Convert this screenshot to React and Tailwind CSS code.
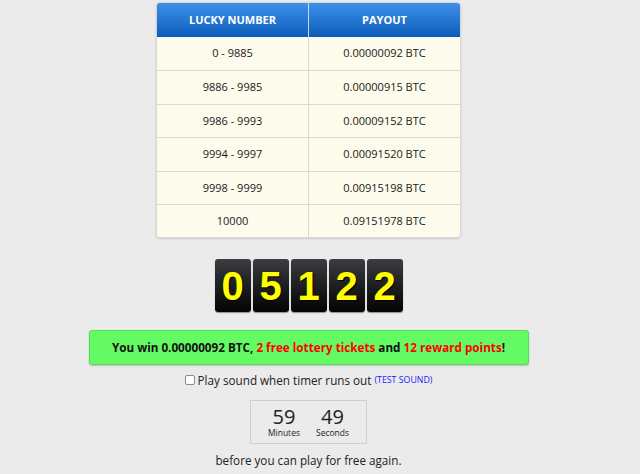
import React from 'react';

const rows = [
  ['0 - 9885', '0.00000092 BTC'],
  ['9886 - 9985', '0.00000915 BTC'],
  ['9986 - 9993', '0.00009152 BTC'],
  ['9994 - 9997', '0.00091520 BTC'],
  ['9998 - 9999', '0.00915198 BTC'],
  ['10000', '0.09151978 BTC'],
];

const digits = ['0', '5', '1', '2', '2'];

export default function App() {
  return (
    <div className="w-[640px] h-[474px] overflow-hidden bg-[#ebebeb] text-[#222] font-['Open_Sans',sans-serif]">
      <div className="w-[617px] flex flex-col items-center">
        {/* Payout table */}
        <div className="mt-[2px] w-[305px] rounded-[4px] border border-[#d6d6d6] overflow-hidden shadow-sm">
          <div className="flex h-[34px] bg-gradient-to-b from-[#3d90ea] to-[#0a5cba] text-white text-[11px] font-bold">
            <div className="w-[152px] flex items-center justify-center border-r border-[#c7d6ea]">LUCKY NUMBER</div>
            <div className="flex-1 flex items-center justify-center">PAYOUT</div>
          </div>
          {rows.map((r, i) => (
            <div key={i} className={`flex h-[33.4px] bg-[#fdfbec] text-[11px] text-[#1a1a1a] ${i > 0 ? 'border-t border-[#d9d9d6]' : ''}`}>
              <div className="w-[152px] flex items-center justify-center border-r border-[#d9d9d6]">{r[0]}</div>
              <div className="flex-1 flex items-center justify-center">{r[1]}</div>
            </div>
          ))}
        </div>

        {/* Lucky number flip digits */}
        <div className="mt-[21px] flex gap-[2px]">
          {digits.map((d, i) => (
            <div key={i} className="w-[36px] h-[53px] rounded-[3px] bg-gradient-to-b from-[#3c3d40] via-[#1e1f21] to-[#050505] flex items-center justify-center shadow-[0_1px_1px_rgba(0,0,0,0.4)]">
              <span className="text-[#ffff00] text-[40px] font-bold font-['Liberation_Sans',Arial,sans-serif] leading-none [text-shadow:1px_1px_1px_#000]">{d}</span>
            </div>
          ))}
        </div>

        {/* Win message */}
        <div className="mt-[18px] w-[440px] h-[35px] rounded-[3px] bg-[#63fa63] border border-[#5ad85a] shadow-[0_1px_2px_rgba(0,0,0,0.2)] flex items-center justify-center text-[11.7px] font-bold text-[#111]">
          <span>
            You win 0.00000092 BTC, <span className="text-[#ff0000]">2 free lottery tickets</span> and{' '}
            <span className="text-[#ff0000]">12 reward points</span>!
          </span>
        </div>

        {/* Sound option */}
        <div className="mt-[7px] flex items-center text-[11.7px] leading-[16px] text-[#222]">
          <span className="w-[10px] h-[10px] mr-[3px] rounded-[2px] border border-[#8a8a8a] bg-white"></span>
          <span>Play sound when timer runs out</span>
          <span className="ml-[3px] text-[8.8px] text-[#1a1aff]">(TEST SOUND)</span>
        </div>

        {/* Countdown */}
        <div className="mt-[12px] w-[117px] h-[44px] border border-[#cfcfcf] bg-[#ebebeb] flex items-center justify-center gap-[16px]">
          <div className="flex flex-col items-center">
            <span className="text-[20px] leading-[22px]">59</span>
            <span className="text-[8.5px] leading-[10px]">Minutes</span>
          </div>
          <div className="flex flex-col items-center">
            <span className="text-[20px] leading-[22px]">49</span>
            <span className="text-[8.5px] leading-[10px]">Seconds</span>
          </div>
        </div>

        <div className="mt-[8px] text-[11.7px] leading-[16px] text-[#222]">before you can play for free again.</div>
      </div>
    </div>
  );
}
